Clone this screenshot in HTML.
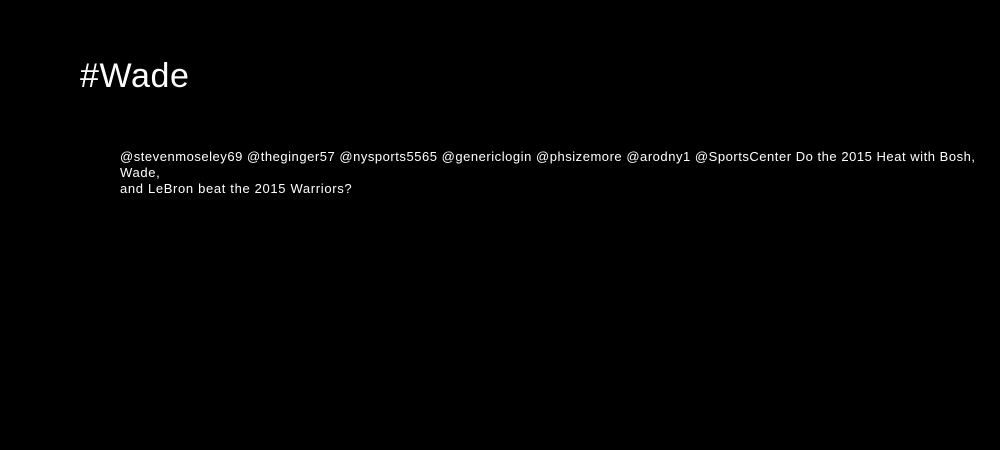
<!DOCTYPE html>
<html><head><style>
html,body{margin:0;padding:0;background:#000;width:1000px;height:450px;overflow:hidden}
body{font-family:"Liberation Sans",sans-serif;color:#fff}
h1{position:absolute;left:80px;top:56px;margin:0;font-size:34px;font-weight:normal;line-height:40px;letter-spacing:0.6px}
.t{position:absolute;left:120px;top:149px;font-size:13px;line-height:16px;letter-spacing:0.66px;white-space:nowrap}
.a{letter-spacing:0.53px}
</style></head><body>
<h1>#Wade</h1>
<div class="t"><span class="a">@stevenmoseley69 @theginger57 @nysports5565 @genericlogin @phsizemore @arodny1 @SportsCenter Do the 2015 Heat with Bosh,</span><br>Wade,<br>and LeBron beat the 2015 Warriors?</div>
</body></html>
